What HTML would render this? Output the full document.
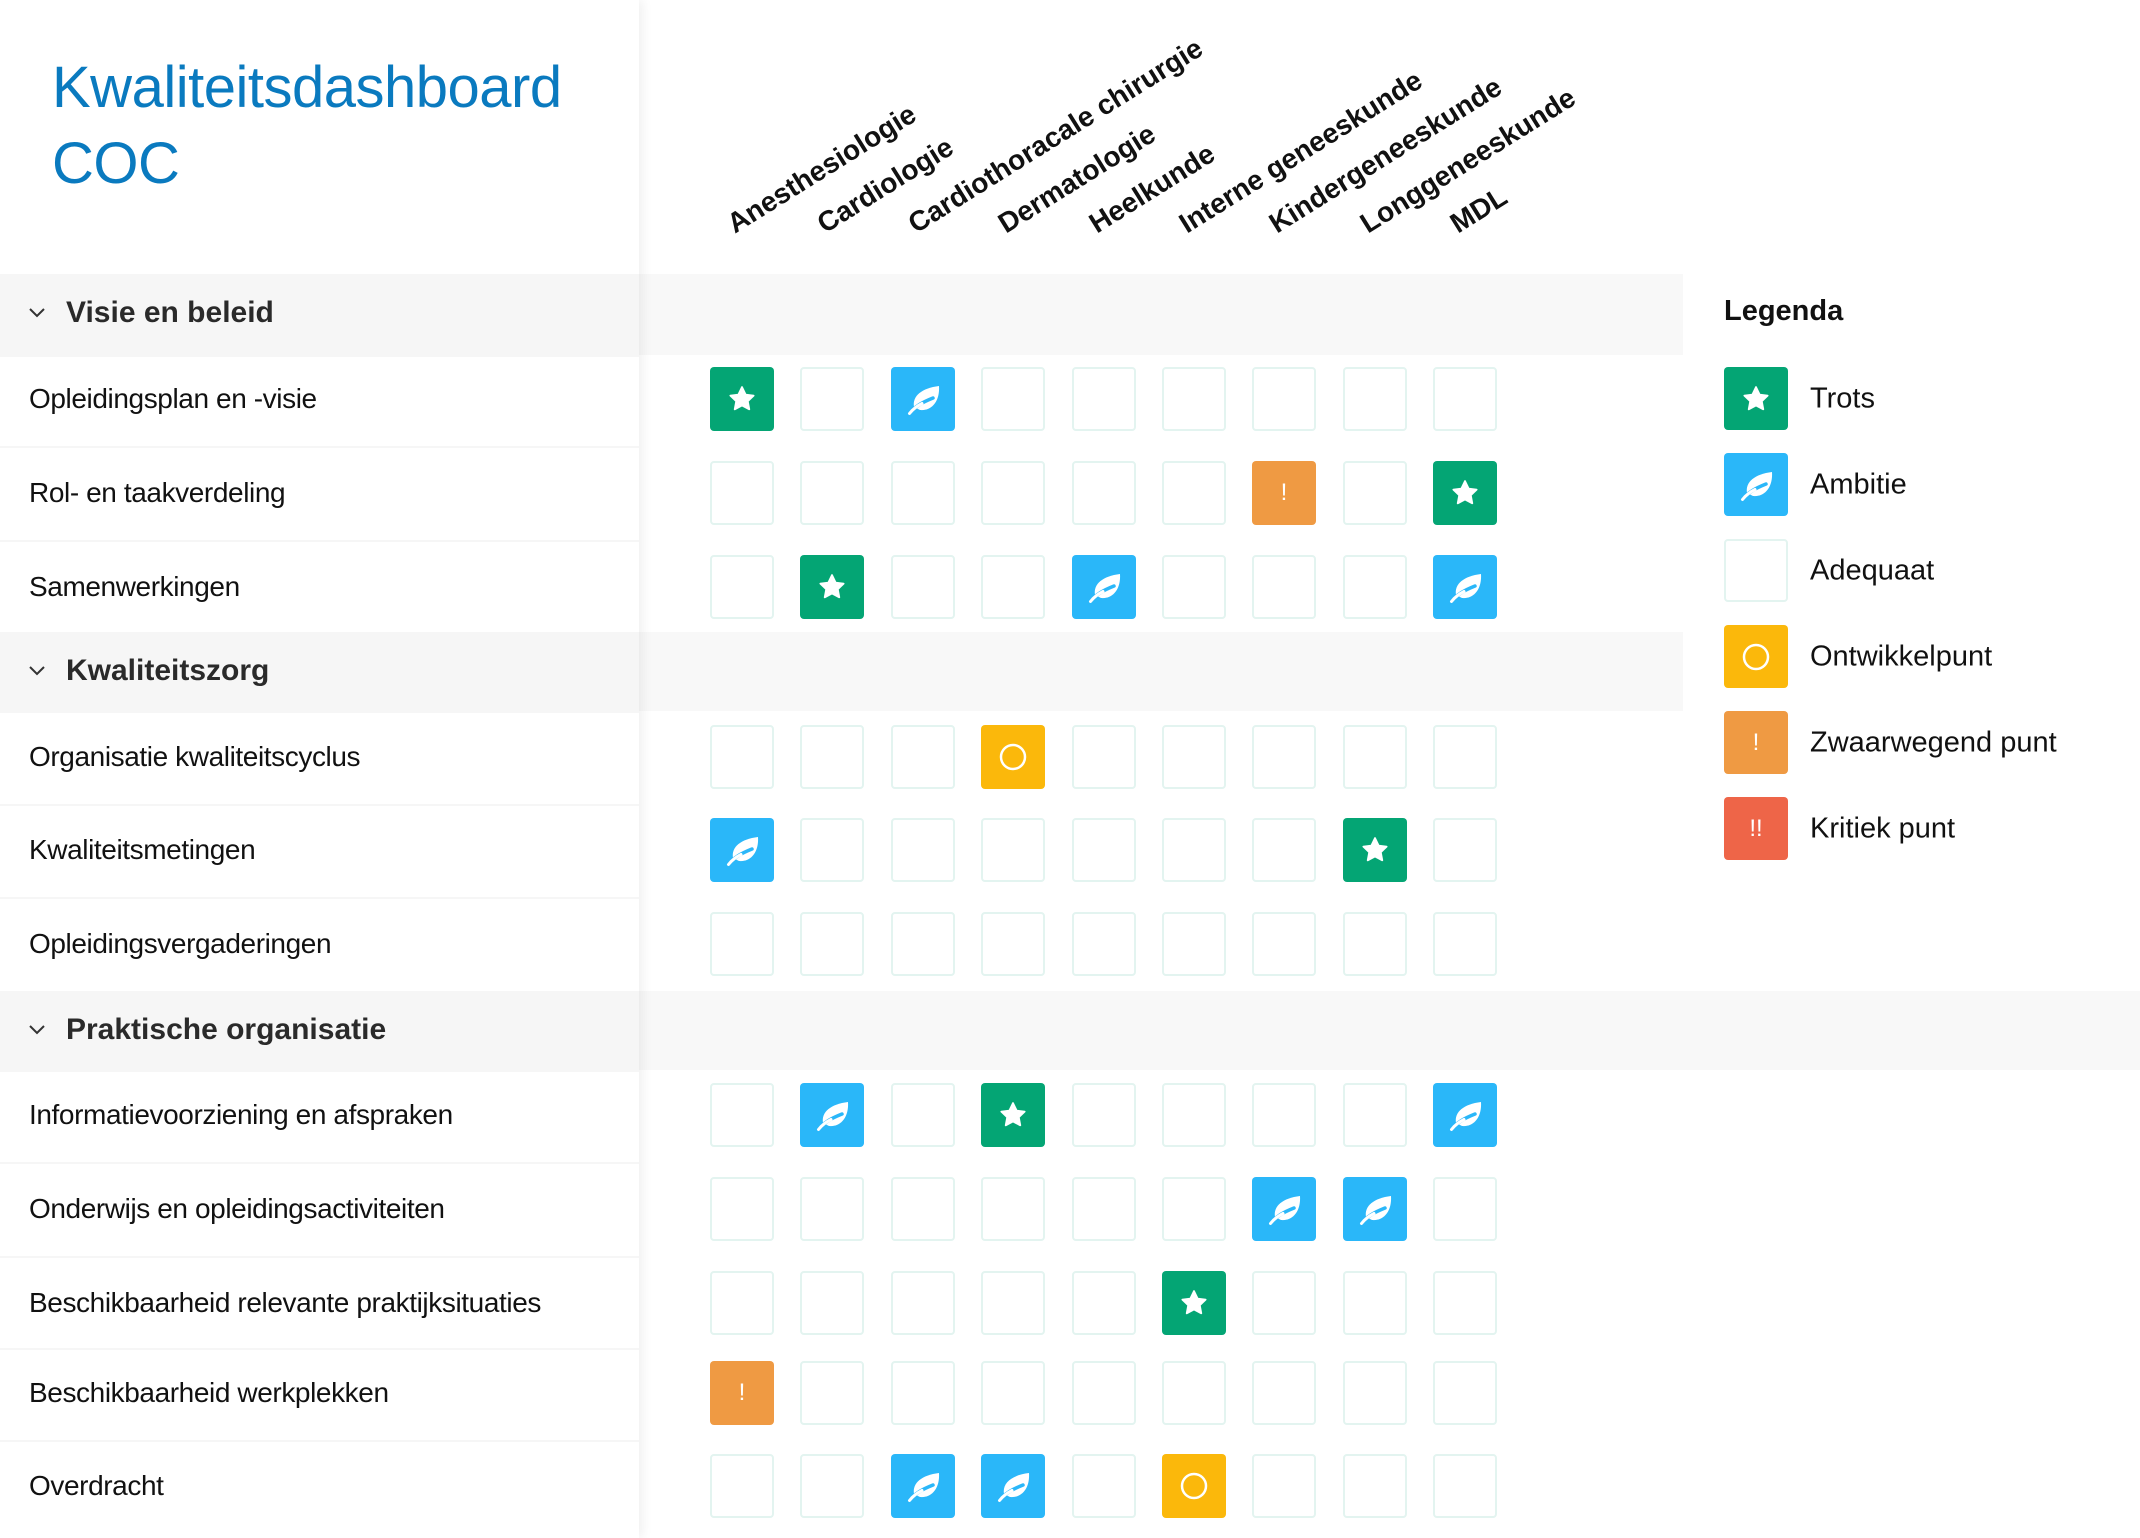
<!DOCTYPE html>
<html><head><meta charset="utf-8"><style>
*{margin:0;padding:0;box-sizing:border-box}
body{width:2140px;height:1538px;position:relative;background:#fff;font-family:"Liberation Sans",sans-serif;overflow:hidden;color:#111}
.band{position:absolute;left:0;background:#f8f8f8}
#side{position:absolute;left:0;top:0;width:639px;height:1538px;background:#fff;box-shadow:4px 0 10px rgba(0,0,0,0.06);z-index:2}
h1{position:absolute;left:52px;top:50px;font-weight:400;font-size:58px;line-height:76px;color:#0a7abf;letter-spacing:-0.5px}
.sec{position:absolute;left:0;width:639px;height:80px;background:#f6f6f6}
.sec span{position:absolute;left:66px;top:22px;font-weight:700;font-size:30px;color:#2a2a2a}
.sec svg{position:absolute;left:28px;top:33px}
.row{position:absolute;left:0;width:639px;border-top:2px solid #f6f6f6}
.row span{position:absolute;left:29px;font-size:28px;letter-spacing:-0.4px;transform:translateY(-50%)}
.cell{position:absolute;width:64px;height:64px;border-radius:4px;border:2px solid #e3f4f0;display:flex;align-items:center;justify-content:center;color:#fff;font-size:24px}
.G{background:#04a574;border:none}.B{background:#2ab7f9;border:none}.Y{background:#fbb80b;border:none}.O{background:#ef9a43;border:none}.R{background:#ee6548;border:none}
.hdr{position:absolute;font-weight:700;font-size:28px;transform-origin:0 100%;transform:rotate(-32deg);white-space:nowrap;line-height:30px}
.leg{position:absolute;left:1810px;font-size:29px;transform:translateY(-50%)}
</style></head><body>
<div class="band" style="top:274px;height:81px;width:1683px"></div>
<div class="band" style="top:632px;height:79px;width:1683px"></div>
<div class="band" style="top:991px;height:79px;width:2140px"></div>
<div id="side">
<h1>Kwaliteitsdashboard<br>COC</h1>
</div>
<div style="position:absolute;left:1724px;top:295px;font-weight:700;font-size:29px">Legenda</div>
<script>
var star='<svg width="30" height="30" viewBox="0 0 24 24"><path d="M12 2.5l2.9 6 6.4.8-4.7 4.5 1.2 6.4L12 17.1l-5.8 3.1 1.2-6.4-4.7-4.5 6.4-.8z" fill="#fff" stroke="#fff" stroke-width="1.5" stroke-linejoin="round"/></svg>';
var leaf='<svg width="64" height="64" viewBox="0 0 64 64"><path d="M23 40C21 29 31 21 48 19C49 34 41 44 29 43Z" fill="#fff"/><path d="M17 48C24 39 32 35 42 31" fill="none" stroke="#2ab7f9" stroke-width="3.5" stroke-linecap="round"/><path d="M18.5 46.5C22 42 26 39 31 36.5" fill="none" stroke="#fff" stroke-width="3" stroke-linecap="round"/></svg>';
var circ='<svg width="30" height="30" viewBox="0 0 30 30"><circle cx="15" cy="15" r="12" fill="none" stroke="#fff" stroke-width="2.5"/></svg>';
var side=document.getElementById('side');
var secs=[["Visie en beleid",274],["Kwaliteitszorg",632],["Praktische organisatie",991]];
secs.forEach(function(s){side.insertAdjacentHTML('beforeend','<div class="sec" style="top:'+s[1]+'px;height:'+(s[1]==274?81:79)+'px"><svg width="18" height="12" viewBox="0 0 18 12"><path d="M2 2l7 7 7-7" fill="none" stroke="#333" stroke-width="2"/></svg><span>'+s[0]+'</span></div>');});
var rows=[["Opleidingsplan en -visie",399,"GEBEEEEEE"],["Rol- en taakverdeling",493,"EEEEEEOEG"],["Samenwerkingen",587,"EGEEBEEEB"],["Organisatie kwaliteitscyclus",757,"EEEYEEEEE"],["Kwaliteitsmetingen",850,"BEEEEEEGE"],["Opleidingsvergaderingen",944,"EEEEEEEEE"],["Informatievoorziening en afspraken",1115,"EBEGEEEEB"],["Onderwijs en opleidingsactiviteiten",1209,"EEEEEEBBE"],["Beschikbaarheid relevante praktijksituaties",1303,"EEEEEGEEE"],["Beschikbaarheid werkplekken",1393,"OEEEEEEEE"],["Overdracht",1486,"EEBBEYEEE"]];
var bounds=[[355,446],[446,540],[540,632],[711,804],[804,897],[897,991],[1070,1162],[1162,1256],[1256,1348],[1348,1440],[1440,1538]];
function content(t){return t=='G'?star:t=='B'?leaf:t=='Y'?circ:t=='O'?'!':t=='R'?'!!':'';}
var h='';
rows.forEach(function(r,i){
 side.insertAdjacentHTML('beforeend','<div class="row" style="top:'+bounds[i][0]+'px;height:'+(bounds[i][1]-bounds[i][0])+'px"><span style="top:'+(r[1]-bounds[i][0]-2)+'px">'+r[0]+'</span></div>');
 for(var c=0;c<9;c++){var t=r[2][c];var x=710+Math.round(c*90.4);
  h+='<div class="cell '+(t=='E'?'':t)+'" style="left:'+x+'px;top:'+(r[1]-32)+'px">'+content(t)+'</div>';}
});
var cols=["Anesthesiologie","Cardiologie","Cardiothoracale chirurgie","Dermatologie","Heelkunde","Interne geneeskunde","Kindergeneeskunde","Longgeneeskunde","MDL"];
cols.forEach(function(n,c){var x=710+Math.round(c*90.4)+28;h+='<div class="hdr" style="left:'+x+'px;top:'+(231-30+8)+'px">'+n+'</div>';});
var leg=[["G","Trots",399],["B","Ambitie",485],["E","Adequaat",571],["Y","Ontwikkelpunt",657],["O","Zwaarwegend punt",743],["R","Kritiek punt",829]];
leg.forEach(function(l){h+='<div class="cell '+(l[0]=='E'?'':l[0])+'" style="left:1724px;top:'+(l[2]-32)+'px;height:63px">'+content(l[0])+'</div><div class="leg" style="top:'+l[2]+'px">'+l[1]+'</div>';});
document.body.insertAdjacentHTML('beforeend',h);
</script>
</body></html>
